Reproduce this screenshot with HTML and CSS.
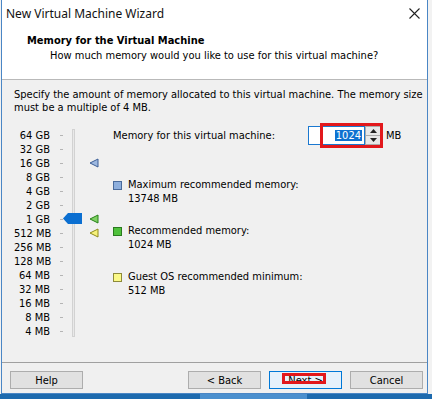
FILE: index.html
```html
<!DOCTYPE html>
<html lang="en">
<head>
    <meta charset="UTF-8">
    <title>New Virtual Machine Wizard</title>
    <link rel="stylesheet" href="styles.css">
</head>
<body>
    <div class="window">
        <div class="titlebar">
            <span class="title">New Virtual Machine Wizard</span>
            <svg class="close" width="11" height="11" viewBox="0 0 11 11">
                <path d="M0.5 0.5 L10.5 10.5 M10.5 0.5 L0.5 10.5" stroke="#222" stroke-width="1.1" fill="none"/>
            </svg>
        </div>

        <div class="header">
            <h1>Memory for the Virtual Machine</h1>
            <p>How much memory would you like to use for this virtual machine?</p>
        </div>

        <div class="content">
            <p class="intro">Specify the amount of memory allocated to this virtual machine. The memory size must be a multiple of 4 MB.</p>

            <div class="memory">
                <!-- slider scale -->
                <div class="slider">
                    <ul class="scale">
                        <li><span>64 GB</span><i></i></li>
                        <li><span>32 GB</span><i></i></li>
                        <li><span>16 GB</span><i></i></li>
                        <li><span>8 GB</span><i></i></li>
                        <li><span>4 GB</span><i></i></li>
                        <li><span>2 GB</span><i></i></li>
                        <li><span>1 GB</span><i></i></li>
                        <li><span>512 MB</span><i></i></li>
                        <li><span>256 MB</span><i></i></li>
                        <li><span>128 MB</span><i></i></li>
                        <li><span>64 MB</span><i></i></li>
                        <li><span>32 MB</span><i></i></li>
                        <li><span>16 MB</span><i></i></li>
                        <li><span>8 MB</span><i></i></li>
                        <li><span>4 MB</span><i></i></li>
                    </ul>
                    <div class="track"></div>

                    <svg class="thumb" style="top: 85px" width="19" height="11" viewBox="0 0 19 11">
                        <polygon points="0,5.5 5,0 19,0 19,11 5,11" fill="#0b6fd1"/>
                    </svg>
                    <svg class="marker" style="top: 30px" width="10" height="10" viewBox="0 0 10 10">
                        <polygon points="1,5 9,1 9,9" fill="#9db8e0" stroke="#3d5f96"/>
                    </svg>
                    <svg class="marker" style="top: 86px" width="10" height="10" viewBox="0 0 10 10">
                        <polygon points="1,5 9,1 9,9" fill="#7ed062" stroke="#268218"/>
                    </svg>
                    <svg class="marker" style="top: 100px" width="10" height="10" viewBox="0 0 10 10">
                        <polygon points="1,5 9,1 9,9" fill="#f6f17a" stroke="#8e8a1c"/>
                    </svg>
                </div>

                <div class="settings">
                    <div class="amount">
                        <label class="amount-label">Memory for this virtual machine:</label>
                        <div class="spin">
                            <div class="spin-input"><span class="selected">1024</span></div>
                            <div class="spin-buttons">
                                <button class="spin-btn">
                                    <svg width="7" height="4" viewBox="0 0 7 4"><polygon points="0,4 3.5,0 7,4" fill="#222"/></svg>
                                </button>
                                <button class="spin-btn">
                                    <svg width="7" height="4" viewBox="0 0 7 4"><polygon points="0,0 7,0 3.5,4" fill="#222"/></svg>
                                </button>
                            </div>
                            <div class="highlight"></div>
                        </div>
                        <span class="unit">MB</span>
                    </div>

                    <div class="legend">
                        <div class="legend-item">
                            <div class="legend-title"><i class="swatch swatch-blue"></i>Maximum recommended memory:</div>
                            <div class="legend-value">13748 MB</div>
                        </div>
                        <div class="legend-item">
                            <div class="legend-title"><i class="swatch swatch-green"></i>Recommended memory:</div>
                            <div class="legend-value">1024 MB</div>
                        </div>
                        <div class="legend-item">
                            <div class="legend-title"><i class="swatch swatch-yellow"></i>Guest OS recommended minimum:</div>
                            <div class="legend-value">512 MB</div>
                        </div>
                    </div>
                </div>
            </div>
        </div>

        <div class="footer">
            <button class="button button-help">Help</button>
            <button class="button">&lt; Back</button>
            <button class="button button-default">Next &gt;<span class="highlight-next"></span></button>
            <button class="button">Cancel</button>
        </div>
    </div>
    <div class="taskbar"><span class="taskbar-item"></span></div>
</body>
</html>
```

FILE: styles.css
```css
* {
    margin: 0;
    padding: 0;
    box-sizing: border-box;
}

body {
    background: #f2f2f2;
    font-family: "DejaVu Sans Condensed", "Liberation Sans", sans-serif;
    font-size: 11px;
    color: #000;
    overflow: hidden;
}

/* Dialog window */
.window {
    width: 427px;
    height: 394px;
    margin-left: 1px;
    border: 1px solid #4a86c5;
    border-top: 0;
    background: #f0f0f0;
    display: flex;
    flex-direction: column;
}

.titlebar {
    height: 26px;
    background: #fff;
    display: flex;
    align-items: center;
    justify-content: space-between;
    padding: 0 7px 0 4px;
}

.title {
    font-family: "Noto Sans", "Liberation Sans", sans-serif;
    font-size: 12px;
    color: #111;
}

.close {
    margin-top: 1px;
}

.header {
    height: 54px;
    background: #fff;
    border-bottom: 1px solid #b9b9b9;
    padding: 8px 0 0 25px;
}

.header h1 {
    font-size: 11px;
    font-weight: bold;
    line-height: 13px;
}

.header p {
    line-height: 13px;
    margin: 2px 0 0 23px;
}

/* Main content */
.content {
    flex: 1;
    padding: 8px 0 0 12px;
}

.intro {
    line-height: 13px;
    width: 412px;
}

.memory {
    display: flex;
    margin-top: 14px;
}

.slider {
    position: relative;
    width: 99px;
    display: flex;
}

.scale {
    list-style: none;
}

.scale li {
    height: 14px;
    display: flex;
    align-items: center;
}

.scale span {
    width: 36px;
    text-align: right;
    white-space: nowrap;
}

.scale i {
    width: 3px;
    height: 1px;
    margin-left: 10px;
    background: #b5b5b5;
}

.track {
    width: 3px;
    margin: 1px 0 1px 9px;
    background: #e9e9e9;
    border: 1px solid #d2d2d2;
}

.thumb {
    position: absolute;
    left: 49px;
}

.marker {
    position: absolute;
    left: 75px;
}

.settings {
    flex: 1;
}

.amount {
    display: flex;
    align-items: center;
    height: 19px;
    margin-top: -2px;
}

.amount-label {
    width: 195px;
}

.spin {
    position: relative;
    display: flex;
    height: 19px;
}

.spin-input {
    width: 57px;
    background: #fff;
    border: 1px solid #1a78d0;
    display: flex;
    align-items: center;
    justify-content: flex-end;
    padding-right: 2px;
}

.selected {
    background: #0f72d0;
    color: #fff;
    line-height: 11px;
    padding: 0 1px;
}

.spin-buttons {
    width: 16px;
    display: flex;
    flex-direction: column;
}

.spin-btn {
    flex: 1;
    background: #e8e8e8;
    border: 1px solid #acacac;
    display: flex;
    align-items: center;
    justify-content: center;
}

.spin-btn + .spin-btn {
    border-top: 0;
}

/* red annotation boxes */
.highlight {
    position: absolute;
    left: 12px;
    top: -3px;
    width: 63px;
    height: 25px;
    border: 3px solid #e2181c;
}

.unit {
    margin-left: 5px;
}

.legend {
    margin-top: 33px;
    display: flex;
    flex-direction: column;
    gap: 18px;
}

.legend-item {
    line-height: 14px;
}

.legend-title {
    display: flex;
    align-items: center;
}

.legend-value {
    padding-left: 15px;
}

.swatch {
    width: 9px;
    height: 9px;
    margin-right: 6px;
    border: 1px solid;
}

.swatch-blue {
    background: #8eafdd;
    border-color: #4a6b9c;
}

.swatch-green {
    background: #4fc13b;
    border-color: #2a7a1f;
}

.swatch-yellow {
    background: #fbf987;
    border-color: #8d8a3a;
}

/* Footer buttons */
.footer {
    border-top: 1px solid #a0a0a0;
    height: 31px;
    padding: 8px 4px 0 8px;
    display: flex;
    gap: 8px;
}

.button {
    position: relative;
    width: 73px;
    height: 18px;
    font-family: inherit;
    font-size: 11px;
    color: #000;
    background: #e1e1e1;
    border: 1px solid #adadad;
}

.button-help {
    margin-right: auto;
}

.button-default {
    background: #e5f1fb;
    border-color: #0078d7;
}

.highlight-next {
    position: absolute;
    left: 12px;
    top: 1px;
    width: 44px;
    height: 11px;
    border: 3px solid #e2181c;
}

.taskbar {
    height: 5px;
    background: #1d6aae;
    position: relative;
}

.taskbar-item {
    position: absolute;
    left: 200px;
    width: 107px;
    height: 5px;
    background: #4a8fce;
}
```
